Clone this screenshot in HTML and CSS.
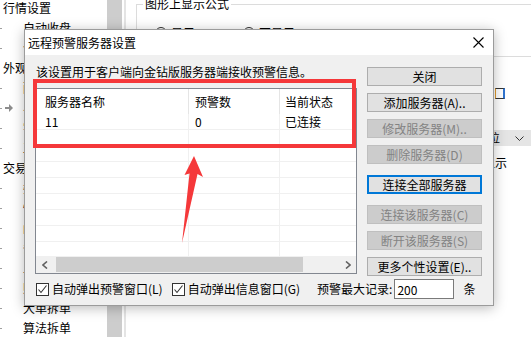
FILE: index.html
```html
<!DOCTYPE html>
<html lang="zh-CN">
<head>
    <meta charset="UTF-8">
    <title>远程预警服务器设置</title>
    <link rel="stylesheet" href="styles.css">
</head>
<body>
    <div class="app">
        <aside class="tree">
            <div class="tree-node">行情设置</div>
            <div class="tree-leaf">自动收盘</div>
            <div class="tree-leaf">个股资料</div>
            <div class="tree-node">外观</div>
            <div class="tree-leaf">配色方案</div>
            <div class="tree-leaf current">
                <svg width="8" height="8" viewBox="0 0 8 8"><polygon points="0,3 4,3 4,0 8,4 4,8 4,5 0,5" fill="#8c8c8c"/></svg>
                <span>界面风格</span>
            </div>
            <div class="tree-leaf">字体设置</div>
            <div class="tree-leaf">工具栏</div>
            <div class="tree-node">交易</div>
            <div class="tree-leaf">委托设置</div>
            <div class="tree-leaf">快捷下单</div>
            <div class="tree-leaf">闪电下单</div>
            <div class="tree-leaf">条件单</div>
            <div class="tree-leaf">止盈止损</div>
            <div class="tree-leaf">账户管理</div>
            <div class="tree-leaf">大单拆单</div>
            <div class="tree-leaf">算法拆单</div>
        </aside>
        <div class="tree-scroll"><div class="tree-thumb"></div></div>

        <main class="panel">
            <fieldset class="group">
                <legend>图形上显示公式</legend>
                <div class="radio-row">
                    <label class="radio-opt"><span class="radio"></span>显示</label>
                    <label class="radio-opt"><span class="radio"></span>不显示</label>
                </div>
            </fieldset>
            <div class="opts">
                <div class="opt-row">
                    <span class="opt-label">显示K线提示窗口</span>
                    <span class="opt-box"></span>
                </div>
                <div class="opt-row opt-row--select">
                    <span class="opt-label">成交量显示单位</span>
                    <span class="select">单位<svg width="9" height="5" viewBox="0 0 9 5"><polyline points="0.5,0.5 4.5,4.5 8.5,0.5" fill="none" stroke="#333" stroke-width="1"/></svg></span>
                </div>
                <div class="opt-row opt-row--text">
                    <span class="opt-label">十字光标</span>
                    <span class="opt-text">显示</span>
                </div>
            </div>
        </main>
    </div>

    <div class="dialog">
        <div class="dialog-title">
            <span>远程预警服务器设置</span>
            <span class="dialog-close">
                <svg width="11" height="11" viewBox="0 0 11 11"><path d="M0.5 0.5L10.5 10.5M10.5 0.5L0.5 10.5" stroke="#000" stroke-width="1.1"/></svg>
            </span>
        </div>
        <div class="dialog-body">
            <div class="main-col">
                <p class="hint">该设置用于客户端向金钻版服务器端接收预警信息。</p>
                <div class="listview">
                    <div class="lv-head">
                        <span class="lv-cell c1">服务器名称</span>
                        <span class="lv-cell c2">预警数</span>
                        <span class="lv-cell c3">当前状态</span>
                    </div>
                    <div class="lv-rows">
                        <div class="lv-row"><span class="lv-cell c1">11</span><span class="lv-cell c2">0</span><span class="lv-cell c3">已连接</span></div>
                        <div class="lv-row"><span class="lv-cell c1"></span><span class="lv-cell c2"></span><span class="lv-cell c3"></span></div>
                        <div class="lv-row"><span class="lv-cell c1"></span><span class="lv-cell c2"></span><span class="lv-cell c3"></span></div>
                        <div class="lv-row"><span class="lv-cell c1"></span><span class="lv-cell c2"></span><span class="lv-cell c3"></span></div>
                        <div class="lv-row"><span class="lv-cell c1"></span><span class="lv-cell c2"></span><span class="lv-cell c3"></span></div>
                        <div class="lv-row"><span class="lv-cell c1"></span><span class="lv-cell c2"></span><span class="lv-cell c3"></span></div>
                        <div class="lv-row"><span class="lv-cell c1"></span><span class="lv-cell c2"></span><span class="lv-cell c3"></span></div>
                        <div class="lv-row"><span class="lv-cell c1"></span><span class="lv-cell c2"></span><span class="lv-cell c3"></span></div>
                        <div class="lv-row"><span class="lv-cell c1"></span><span class="lv-cell c2"></span><span class="lv-cell c3"></span></div>
                    </div>
                    <div class="hscroll">
                        <span class="hs-btn"><svg width="6" height="8" viewBox="0 0 6 8"><polyline points="5,0.5 1,4 5,7.5" fill="none" stroke="#606060" stroke-width="1.6"/></svg></span>
                        <span class="hs-thumb"></span>
                        <span class="hs-track"></span>
                        <span class="hs-btn"><svg width="6" height="8" viewBox="0 0 6 8"><polyline points="1,0.5 5,4 1,7.5" fill="none" stroke="#606060" stroke-width="1.6"/></svg></span>
                    </div>
                </div>
            </div>

            <div class="side-buttons">
                <button class="btn">关闭</button>
                <button class="btn">添加服务器(A)..</button>
                <button class="btn" disabled>修改服务器(M)..</button>
                <button class="btn" disabled>删除服务器(D)</button>
                <button class="btn btn-default spaced">连接全部服务器</button>
                <button class="btn spaced" disabled>连接该服务器(C)</button>
                <button class="btn" disabled>断开该服务器(S)</button>
                <button class="btn">更多个性设置(E)..</button>
            </div>

            <div class="dialog-foot">
                <label class="check">
                    <span class="check-box"><svg width="11" height="11" viewBox="0 0 11 11"><polyline points="1.5,5.5 4,8.5 9.5,1.5" fill="none" stroke="#333" stroke-width="1.1"/></svg></span>
                    自动弹出预警窗口(L)
                </label>
                <label class="check">
                    <span class="check-box"><svg width="11" height="11" viewBox="0 0 11 11"><polyline points="1.5,5.5 4,8.5 9.5,1.5" fill="none" stroke="#333" stroke-width="1.1"/></svg></span>
                    自动弹出信息窗口(G)
                </label>
                <span class="max-label">预警最大记录:</span>
                <input class="max-input" type="text" value="200">
                <span class="max-unit">条</span>
            </div>
        </div>
    </div>

    <!-- annotation marks drawn over the screenshot -->
    <div class="mark-box"></div>
    <svg class="mark-arrow" width="531" height="337" viewBox="0 0 531 337">
        <polygon points="194,156 203,177 197.5,174 182,243 189.5,173.5 184.5,175" fill="#f5383a"/>
    </svg>
</body>
</html>
```

FILE: styles.css
```css
* {
    box-sizing: border-box;
}

body {
    margin: 0;
    width: 531px;
    height: 337px;
    overflow: hidden;
    position: relative;
    background: #fff;
    color: #000;
    font-family: "Noto Sans CJK SC", "Microsoft YaHei", sans-serif;
    font-size: 12px;
}

.app {
    display: flex;
    height: 100%;
}

/* settings tree on the left */
.tree {
    width: 107px;
    margin-top: -2px;
}

.tree-node,
.tree-leaf {
    height: 20px;
    line-height: 20px;
    white-space: nowrap;
}

.tree-node {
    padding-left: 3px;
}

.tree-leaf {
    padding-left: 23px;
    background: linear-gradient(#a0a0a0, #a0a0a0) 0 50% / 2px 1px no-repeat;
}

.tree-leaf.current {
    display: flex;
    align-items: center;
    padding-left: 5px;
}

.tree-leaf.current svg {
    margin-right: 10px;
}

.tree-scroll {
    width: 19px;
    border-right: 2px solid #e4e4e4;
}

.tree-thumb {
    width: 15px;
    height: 100%;
    background: #cdcdcd;
}

/* right settings panel */
.panel {
    flex: 1;
    padding-left: 10px;
    overflow: hidden;
}

.group {
    margin: -3px 0 0;
    padding: 0 0 0 6px;
    width: 440px;
    height: 60px;
    min-width: 0;
    border: 1px solid #dcdcdc;
}

.group legend {
    padding: 0 2px;
    line-height: 14px;
}

.radio-row {
    display: flex;
    margin: 15px 0 0 12px;
}

.radio-opt {
    display: flex;
    align-items: center;
    gap: 4px;
    width: 88px;
    line-height: 14px;
}

.radio {
    width: 12px;
    height: 12px;
    border: 1px solid #333;
    border-radius: 50%;
}

.opts {
    padding-top: 31px;
}

.opt-row {
    display: flex;
    align-items: center;
    height: 11px;
}

.opt-label {
    width: 340px;
    flex: none;
}

.opt-box {
    width: 10px;
    height: 11px;
    margin-left: 19px;
    border: 1px solid #333;
    border-left-color: #e09a2e;
    border-right: 2px solid #2f74d0;
}

.opt-row--select {
    height: 16px;
    margin-top: 31px;
}

.select {
    display: flex;
    align-items: center;
    justify-content: space-between;
    width: 63px;
    height: 16px;
    padding-right: 7px;
    background: #e5e5e5;
    line-height: 16px;
}

.opt-row--text {
    height: 14px;
    margin-top: 10px;
}

.opt-text {
    margin-left: 7px;
    line-height: 14px;
}

/* dialog window */
.dialog {
    position: absolute;
    left: 24px;
    top: 29px;
    width: 470px;
    height: 277px;
    border: 1px solid #9b9b9b;
    background: #f0f0f0;
    box-shadow: 0 2px 12px rgba(0, 0, 0, 0.28);
}

.dialog-title {
    display: flex;
    align-items: center;
    height: 25px;
    padding-left: 3px;
    background: #fff;
    line-height: 14px;
}

.dialog-close {
    display: flex;
    align-items: center;
    justify-content: center;
    width: 30px;
    height: 25px;
    margin-left: auto;
}

.dialog-body {
    display: grid;
    grid-template-columns: 322px 115px;
    column-gap: 10px;
    padding: 12px 11px 0 10px;
}

.hint {
    margin: -2px 0 0;
    padding-left: 1px;
    line-height: 14px;
}

.listview {
    display: flex;
    flex-direction: column;
    height: 186px;
    margin-top: 9px;
    border: 1px solid #828790;
    background: #fff;
}

.lv-head {
    display: flex;
    height: 25px;
    line-height: 25px;
}

.lv-head .lv-cell {
    border-right: 1px solid #e5e5e5;
}

.lv-cell {
    white-space: nowrap;
}

.c1 {
    width: 153px;
    padding-left: 9px;
}

.c2 {
    width: 91px;
    padding-left: 6px;
}

.c3 {
    flex: 1;
    padding-left: 5px;
}

.lv-head .c3 {
    border-right: none;
}

.lv-rows {
    flex: 1;
    overflow: hidden;
}

.lv-row {
    display: flex;
    height: 16px;
    line-height: 15px;
    border-bottom: 1px solid #f0f0f0;
}

.lv-row .c1,
.lv-row .c2 {
    border-right: 1px solid #f0f0f0;
}

.hscroll {
    display: flex;
    align-items: center;
    height: 17px;
    background: #f0f0f0;
}

.hs-btn {
    display: flex;
    align-items: center;
    justify-content: center;
    width: 17px;
    height: 17px;
}

.hs-thumb {
    width: 247px;
    height: 15px;
    margin-left: 3px;
    background: #cdcdcd;
}

.hs-track {
    flex: 1;
}

/* button column */
.side-buttons {
    display: flex;
    flex-direction: column;
}

.btn {
    height: 19px;
    padding: 0;
    border: 1px solid #adadad;
    background: #e1e1e1;
    color: #000;
    font-family: inherit;
    font-size: 12px;
    line-height: 14px;
}

.btn + .btn {
    margin-top: 7px;
}

.btn + .btn.spaced {
    margin-top: 11px;
}

.btn:disabled {
    border-color: #bfbfbf;
    background: #cccccc;
    color: #838383;
}

.btn-default {
    border: 2px solid #0078d7;
}

/* bottom options */
.dialog-foot {
    grid-column: 1 / -1;
    display: flex;
    align-items: center;
    height: 20px;
    margin-top: 3px;
    padding-left: 1px;
    line-height: 14px;
    white-space: nowrap;
}

.check {
    display: flex;
    align-items: center;
    gap: 3px;
    margin-right: 9px;
}

.check-box {
    display: flex;
    align-items: center;
    justify-content: center;
    width: 13px;
    height: 13px;
    border: 1px solid #333;
    background: #fff;
}

.max-label {
    margin-left: 8px;
}

.max-input {
    width: 60px;
    height: 20px;
    margin-left: 2px;
    padding: 0 2px;
    border: 1px solid #7a7a7a;
    background: #fff;
    font-family: inherit;
    font-size: 12px;
}

.max-unit {
    margin-left: 9px;
}

/* red annotation */
.mark-box {
    position: absolute;
    left: 33px;
    top: 79px;
    width: 323px;
    height: 69px;
    border: 4px solid #f5383a;
}

.mark-arrow {
    position: absolute;
    left: 0;
    top: 0;
    pointer-events: none;
}
```
